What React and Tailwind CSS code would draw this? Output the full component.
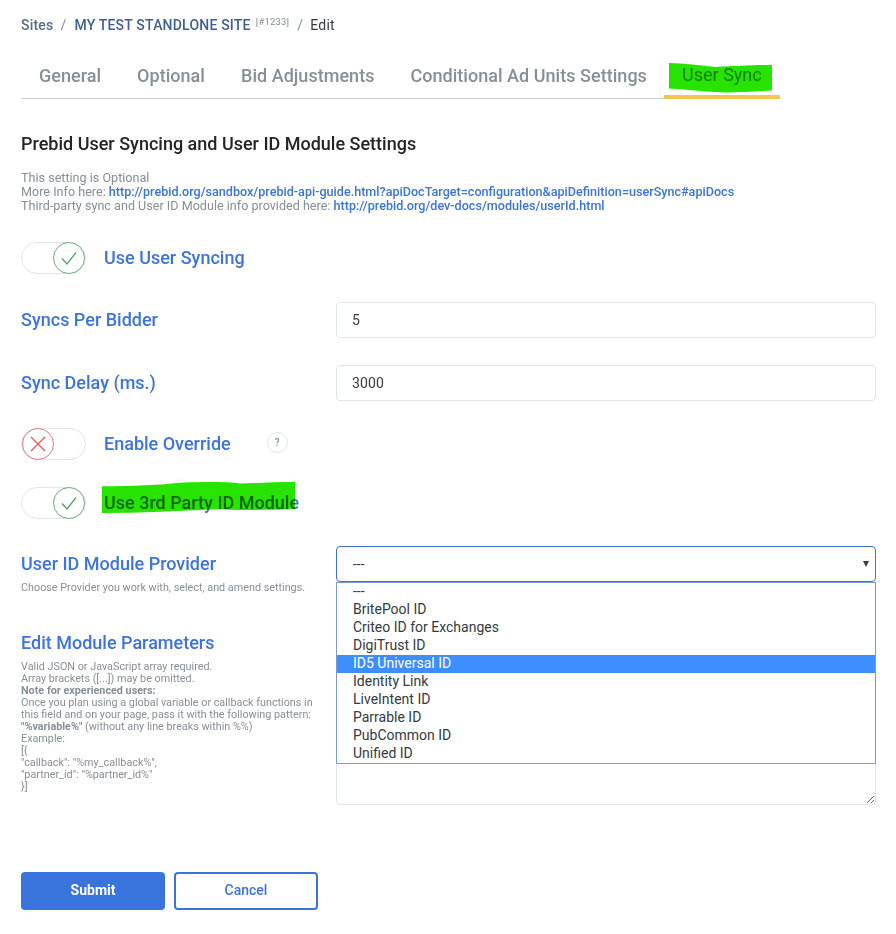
import React from 'react';

const tabs = ['General', 'Optional', 'Bid Adjustments', 'Conditional Ad Units Settings'];
const providers = ['---', 'BritePool ID', 'Criteo ID for Exchanges', 'DigiTrust ID', 'ID5 Universal ID', 'Identity Link', 'LiveIntent ID', 'Parrable ID', 'PubCommon ID', 'Unified ID'];

function Toggle({ on }) {
  return (
    <div className={`flex h-8 w-[65px] shrink-0 rounded-full border border-[#dee5ec] bg-white ${on ? 'justify-end' : 'justify-start'}`}>
      <div className={`-my-px flex h-8 w-8 items-center justify-center rounded-full border bg-white ${on ? 'border-[#6fae7c]' : 'border-[#e67c7c]'}`}>
        {on ? (
          <svg width="20" height="20" viewBox="0 0 20 20" fill="none" stroke="#58a868" strokeWidth="1.4">
            <path d="M3 10.5 8 16 17 4.5" />
          </svg>
        ) : (
          <svg width="20" height="20" viewBox="0 0 20 20" fill="none" stroke="#e45f5f" strokeWidth="1.4">
            <path d="M3 3 17 17M17 3 3 17" />
          </svg>
        )}
      </div>
    </div>
  );
}

// marker-pen highlight drawn over the text
function Scribble({ className, d }) {
  return (
    <svg className={`pointer-events-none absolute mix-blend-multiply ${className}`} viewBox="0 0 100 100" preserveAspectRatio="none">
      <path d={d} fill="#26e400" />
    </svg>
  );
}

function InputRow({ label, value }) {
  return (
    <div className="flex items-center">
      <label className="mb-[2px] w-[315px] text-[18px] font-medium text-[#3d73dd]">{label}</label>
      <input readOnly value={value} className="h-9 w-[540px] rounded border border-[#dee5ec] px-[15px] text-sm tracking-[0.1px] text-[#343a40] outline-none" />
    </div>
  );
}

export default function App() {
  return (
    <div className="min-h-[934px] bg-white pl-[21px] pr-5 pt-4 font-['Roboto',sans-serif]">
      <div className="flex h-[18px] items-center text-sm tracking-[0.2px]">
        <a className="font-medium text-[#5a6b85]">Sites</a>
        <span className="ml-[7px] mr-2 text-[#868e96]">/</span>
        <a className="font-medium text-[#3f5f8f]">MY TEST STANDLONE SITE</a>
        <sup className="ml-[5px] mt-1 text-[9.5px] text-[#868e96]">[#1233]</sup>
        <span className="ml-2 mr-[7px] text-[#868e96]">/</span>
        <span className="text-[#343a40]">Edit</span>
      </div>

      <div className="mt-[14px] flex h-[51px] w-[759px] items-center border-b border-[#c3ced6] pl-[18px] pt-[6px]">
        <div className="flex gap-9 text-lg font-medium tracking-[0.03px] text-[#868e96]">
          {tabs.map((t) => <a key={t}>{t}</a>)}
        </div>
        <div className="relative ml-[17px] -mb-px -mt-[6px] flex h-[51px] w-[116px] items-center justify-center border-b-4 border-[#f0c850] pt-[6px] text-lg text-[#868e96]">
          <a className="font-normal">User Sync</a>
          <Scribble className="left-[5px] top-[15px] h-[30px] w-[103px]" d="M0 0C15 0 30 8 45 13 65 10 85 6 100 7L100 92C80 96 60 100 45 97 30 94 15 88 0 85Z" />
        </div>
      </div>

      <h2 className="mt-[33px] text-lg font-medium leading-6 text-[#212529]">Prebid User Syncing and User ID Module Settings</h2>

      <p className="mt-[15px] text-[12.6px] leading-[14px] text-[#868e96]">
        This setting is Optional<br />
        More Info here: <a className="font-medium text-[#3d73dd]">http://prebid.org/sandbox/prebid-api-guide.html?apiDocTarget=configuration&amp;apiDefinition=userSync#apiDocs</a><br />
        Third-party sync and User ID Module info provided here: <a className="font-medium text-[#3d73dd]">http://prebid.org/dev-docs/modules/userId.html</a>
      </p>

      <div className="mt-[29px] flex items-center gap-[18px]">
        <Toggle on />
        <span className="text-lg font-medium text-[#3d73dd]">Use User Syncing</span>
      </div>

      <div className="mt-7"><InputRow label="Syncs Per Bidder" value="5" /></div>
      <div className="mt-[27px]"><InputRow label="Sync Delay (ms.)" value="3000" /></div>

      <div className="mt-[27px] flex items-center gap-[18px]">
        <Toggle />
        <span className="text-lg font-medium text-[#3d73dd]">Enable Override</span>
        <span className="ml-[18px] flex h-[21px] w-[21px] -translate-y-[2px] items-center justify-center rounded-full border border-[#dee5ec] text-[10px] font-medium text-[#868e96]">?</span>
      </div>

      <div className="relative mt-[27px] flex items-center gap-[18px]">
        <Toggle on />
        <span className="text-lg font-medium text-[#3d73dd]">Use 3rd Party ID Module</span>
        <Scribble className="left-[81px] -top-[5px] h-[31px] w-[193px]" d="M0 14C15 14 30 10 42 2 55 -1 65 0 72 5 80 3 90 0 100 0L100 88C85 90 70 92 60 88 40 94 20 100 0 100Z" />
      </div>

      <div className="relative mt-[27px] flex items-start">
        <div className="w-[315px]">
          <h3 className="mt-[6px] text-lg font-medium leading-6 text-[#3d73dd]">User ID Module Provider</h3>
          <p className="mt-[5px] text-[10.8px] leading-[14px] text-[#868e96]">Choose Provider you work with, select, and amend settings.</p>
          <h3 className="mt-9 text-lg font-medium leading-6 text-[#3d73dd]">Edit Module Parameters</h3>
          <p className="mt-[6px] text-[10.8px] leading-[12px] text-[#868e96]">
            Valid JSON or JavaScript array required.<br />
            Array brackets ([...]) may be omitted.<br />
            <b>Note for experienced users:</b><br />
            Once you plan using a global variable or callback functions in<br />
            this field and on your page, pass it with the following pattern:<br />
            <b>"%variable%"</b> (without any line breaks within %%)<br />
            Example:<br />
            [&#123;<br />
            "callback": "%my_callback%",<br />
            "partner_id": "%partner_id%"<br />
            &#125;]
          </p>
        </div>
        <div className="w-[540px]">
          <div className="flex h-9 items-center justify-between rounded border border-[#3d73dd] pl-4 pr-[6px] text-sm text-[#343a40]">
            <span>---</span>
            <span className="h-0 w-0 border-x-[3.5px] border-t-[6px] border-x-transparent border-t-[#343a40]" />
          </div>
          <textarea readOnly className="mt-[43px] block h-[180px] w-full rounded border border-[#dee5ec] outline-none" />
        </div>
        <ul className="absolute left-[315px] top-9 w-[540px] border border-[#7b9bd4] bg-white text-sm leading-4 text-[#343a40]">
          {providers.map((p) => (
            <li key={p} className={`h-[18px] pl-4 ${p === 'ID5 Universal ID' ? 'bg-[#3d8eff] text-white' : ''}`}>{p}</li>
          ))}
        </ul>
      </div>

      <div className="mt-[67px] flex gap-[9px]">
        <button className="h-[38px] w-[144px] rounded bg-[#3874dc] pb-[2px] text-sm font-bold text-white">Submit</button>
        <button className="h-[38px] w-[144px] rounded border-2 border-[#3874dc] bg-white pb-[2px] text-sm font-medium text-[#3d73dd]">Cancel</button>
      </div>
    </div>
  );
}
